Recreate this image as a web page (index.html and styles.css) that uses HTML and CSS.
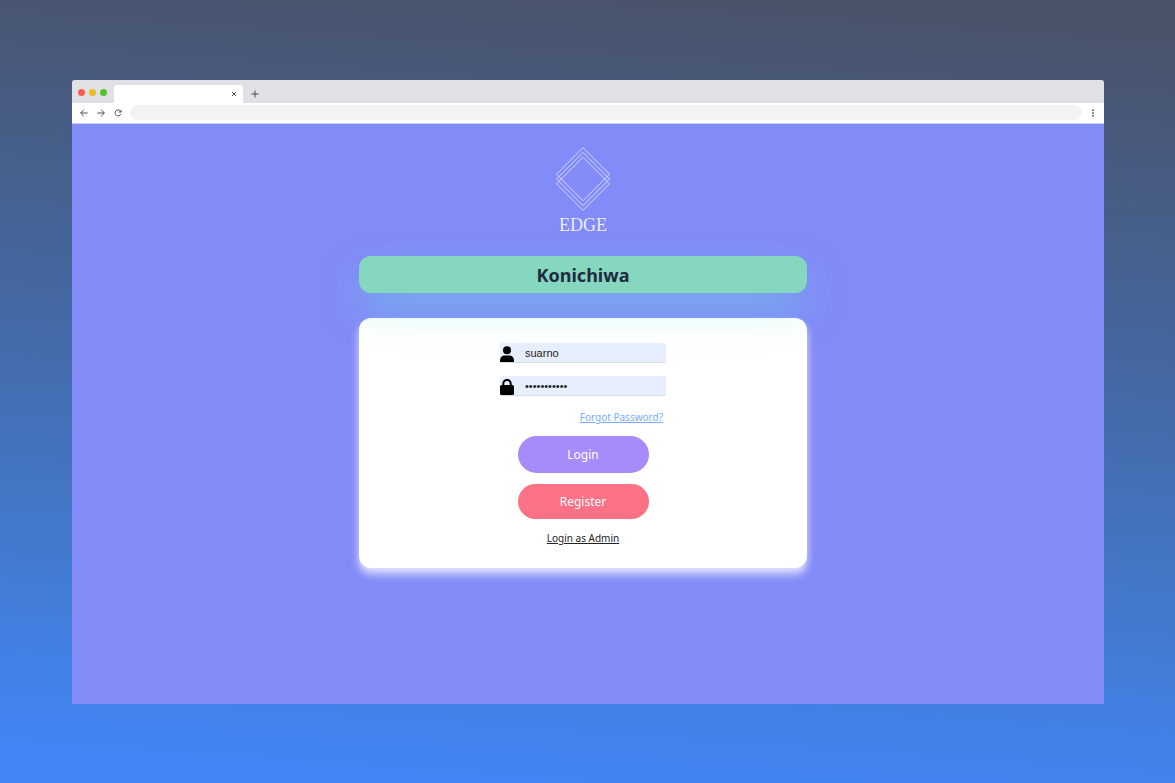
FILE: index.html
```html
<!DOCTYPE html>
<html lang="en">
<head>
<meta charset="utf-8">
<title>Edge Login</title>
<link rel="stylesheet" href="styles.css">
</head>
<body>
<div class="window">
  <header class="tabbar">
    <div class="lights"><span class="light red"></span><span class="light yellow"></span><span class="light green"></span></div>
    <div class="tab">
      <button class="tab-close" type="button" aria-label="Close tab"><svg width="6" height="6" viewBox="0 0 6 6"><path d="M1 1l4 4M5 1L1 5"/></svg></button>
    </div>
    <button class="icon-button new-tab" type="button" aria-label="New tab"><svg width="8" height="8" viewBox="0 0 8 8"><path d="M4 .5v7M.5 4h7"/></svg></button>
  </header>
  <nav class="toolbar" aria-label="Browser">
    <button class="icon-button" type="button" aria-label="Back"><svg width="8" height="8" viewBox="0 0 8 8"><path d="M7.6 4H.8M3.8 .8L.6 4l3.2 3.2"/></svg></button>
    <button class="icon-button" type="button" aria-label="Forward"><svg width="8" height="8" viewBox="0 0 8 8"><path d="M.4 4h6.8M4.2 .8L7.4 4 4.2 7.2"/></svg></button>
    <button class="icon-button" type="button" aria-label="Reload"><svg width="8" height="8" viewBox="0 0 8 8"><path d="M6.8 5.2A3 3 0 1 1 6.3 1.9"/><path class="solid" d="M7.5.5v3H4.6z"/></svg></button>
    <input class="address" type="text" aria-label="Address">
    <button class="icon-button menu" type="button" aria-label="Menu"><svg width="4" height="8" viewBox="0 0 4 8"><path class="solid" d="M1.2 .5h1.7v1.6H1.2zM1.2 3.2h1.7v1.6H1.2zM1.2 5.9h1.7v1.6H1.2z"/></svg></button>
  </nav>
  <main class="page">
    <div class="logo">
      <svg width="56" height="64" viewBox="0 0 56 64" aria-hidden="true"><path d="M28 .7L54.5 27.2 28 53.7 1.5 27.2zM28 5.5L54.5 32 28 58.5 1.5 32zM28 10.3L54.5 36.8 28 63.3 1.5 36.8z" class="outline"/></svg>
      <span>EDGE</span>
    </div>
    <h1 class="greeting">Konichiwa</h1>
    <form class="card">
      <div class="field">
        <label for="user"><svg width="14" height="16" viewBox="0 0 14 16" role="img" aria-label="Username"><circle cx="7" cy="4.2" r="4"/><path d="M0 15.4v-1.2C0 11 2 9.4 4.8 9.4h4.4c2.8 0 4.8 1.6 4.8 4.8v1.2q0 .6-.8.6H.8Q0 16 0 15.4z"/></svg></label>
        <input id="user" type="text" value="suarno">
      </div>
      <div class="field">
        <label for="password"><svg width="14" height="16" viewBox="0 0 14 16" role="img" aria-label="Password"><path d="M3.3 7V4.6a3.7 3.7 0 0 1 7.4 0V7" class="shackle"/><rect y="6" width="14" height="10" rx="1.6"/></svg></label>
        <input id="password" type="password" value="password123">
      </div>
      <a class="forgot" href="#">Forgot Password?</a>
      <button class="action login" type="submit">Login</button>
      <button class="action register" type="button">Register</button>
      <a class="admin" href="#">Login as Admin</a>
    </form>
  </main>
</div>
</body>
</html>
```
FILE: styles.css
```css
* {
  box-sizing: border-box;
}

body {
  margin: 0;
  min-height: 100vh;
  display: flex;
  padding: 80px 71px 79px 72px;
  background: linear-gradient(184deg, #49546a 4%, #485a80 19%, #466089 27%, #4468a4 44%, #4476c4 66%, #4280e2 83%, #4285f4 96%);
  font-family: "Noto Sans", "Open Sans", sans-serif;
}

button,
input {
  font: inherit;
  border: 0;
  padding: 0;
}

button {
  cursor: pointer;
}

svg {
  display: block;
}

.window {
  flex: 1;
  display: flex;
  flex-direction: column;
  border-radius: 3px 3px 0 0;
  overflow: hidden;
  background: #838bf8;
}

.tabbar {
  display: flex;
  height: 23px;
  background: #dfe1e5;
}

.lights {
  display: flex;
  align-items: center;
  gap: 4px;
  padding: 1px 7px 0 6px;
}

.light {
  width: 7px;
  height: 7px;
  border-radius: 50%;
}

.red {
  background: #ff5a52;
}

.yellow {
  background: #e6c029;
}

.green {
  background: #53c22b;
}

.tab {
  display: flex;
  align-items: center;
  justify-content: flex-end;
  width: 129px;
  margin-top: 5px;
  padding-right: 6px;
  border-radius: 3px 3px 0 0;
  background: #fff;
}

.tab-close,
.icon-button {
  background: none;
  fill: none;
  stroke: #4c4f53;
}

.new-tab {
  margin: 4px 0 0 8px;
}

.toolbar {
  display: flex;
  align-items: center;
  gap: 9px;
  height: 21px;
  padding: 0 9px 1px 8px;
  border-bottom: 1px solid #c9cbfb;
  background: #fff;
}

.solid {
  fill: #4c4f53;
  stroke: none;
}

.address {
  flex: 1;
  min-width: 0;
  height: 15px;
  margin-left: -1px;
  padding: 0 8px;
  border-radius: 8px;
  background: #f1f3f4;
  font-size: 10px;
}

.page {
  flex: 1;
  display: flex;
  flex-direction: column;
  align-items: center;
  padding: 23px 10px 24px 0;
}

.logo {
  display: flex;
  flex-direction: column;
  align-items: center;
  gap: 4px;
  margin-bottom: 21px;
  color: #eceeff;
  font: 18px/20px "Liberation Serif", serif;
}

.outline {
  fill: none;
  stroke: #d6d9fe;
}

.greeting {
  position: relative;
  width: 448px;
  max-width: 100%;
  margin: 0 0 25px;
  padding: 5px 0 4px;
  border-radius: 12px;
  background: #86d7bf;
  box-shadow: 0 18px 40px -6px rgba(94, 234, 212, 0.54);
  color: #1f2b40;
  font-size: 18px;
  line-height: 28px;
  text-align: center;
}

.card {
  display: flex;
  flex-direction: column;
  align-items: center;
  width: 448px;
  max-width: 100%;
  padding: 25px 0 22px;
  border-radius: 12px;
  background: #fff;
  box-shadow: 0 6px 8px rgba(255, 255, 255, 0.75);
}

.field {
  display: flex;
  align-items: center;
  width: 166px;
  height: 20px;
  margin-bottom: 13px;
  border-bottom: 1px solid #d5dae4;
  border-radius: 2px;
  background: #e7effd;
}

.field label {
  padding-top: 2px;
}

.field input {
  flex: 1;
  min-width: 0;
  height: 18px;
  padding-left: 11px;
  background: transparent;
  color: #222;
  font: 11px "Liberation Sans", sans-serif;
}

.shackle {
  fill: none;
  stroke: #000;
  stroke-width: 2;
}

.forgot {
  width: 166px;
  padding-right: 3px;
  color: #78adfb;
  font-size: 10px;
  line-height: 16px;
  text-align: right;
}

.action {
  width: 131px;
  border-radius: 20px;
  color: #fff;
  font-size: 12px;
}

.login {
  height: 37px;
  margin: 11px 0;
  background: #a78bfa;
}

.register {
  height: 35px;
  margin-bottom: 11px;
  background: #fb7185;
}

.admin {
  color: #222;
  font-size: 10px;
  line-height: 16px;
}
```
